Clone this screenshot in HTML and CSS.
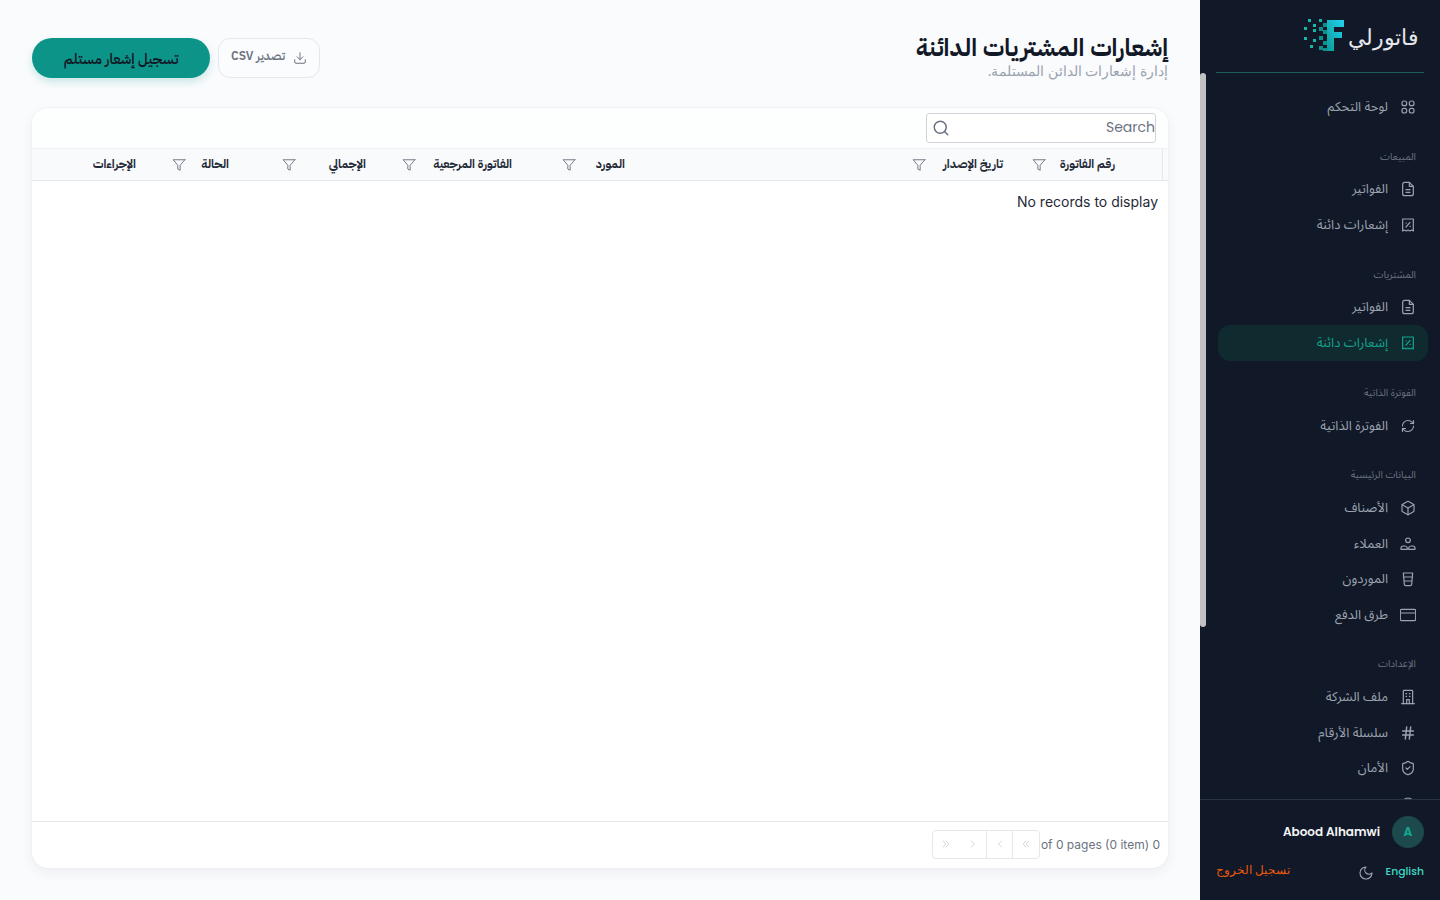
FILE: index.html
```html
<!DOCTYPE html>
<html lang="ar" dir="rtl">
<head>
<meta charset="utf-8">
<title>إشعارات المشتريات الدائنة</title>
<link rel="stylesheet" href="styles.css">
</head>
<body>
<div class="app">
  <aside class="sidebar">
    <div class="scroll-thumb"></div>
    <header class="brand">
      <span class="brand-name">فاتورلي</span>
      <svg class="logo" viewBox="0 0 50 40">
        <defs><linearGradient id="lg" x1="0" y1="1" x2="1" y2="0"><stop offset="0" stop-color="#0d9a98"/><stop offset="1" stop-color="#22d3ee"/></linearGradient></defs>
        <path fill="url(#lg)" d="M27 5h17v7H34v5h8v6h-8v13h-7z"/>
        <g fill="#14b8a6"><rect x="8" y="4" width="3" height="3"/><rect x="13" y="9" width="3" height="3"/><rect x="19" y="4" width="3" height="3"/><rect x="4" y="12" width="3" height="3"/><rect x="13" y="14" width="3" height="3"/><rect x="4" y="22" width="3" height="3"/><rect x="13" y="24" width="3" height="3"/><rect x="10" y="30" width="3" height="3"/></g>
        <g fill="#0e8f8a"><rect x="19" y="12" width="4" height="4"/><rect x="23" y="8" width="4" height="4"/><rect x="23" y="15" width="4" height="4"/><rect x="19" y="21" width="4" height="4"/><rect x="23" y="26" width="4" height="4"/><rect x="19" y="31" width="4" height="4"/><rect x="23" y="33" width="4" height="3"/></g>
      </svg>
    </header>
    <nav class="nav">
      <a class="item"><svg class="ic" viewBox="0 0 24 24"><rect x="3" y="3" width="7" height="7" rx="3"/><rect x="14" y="3" width="7" height="7" rx="3"/><rect x="3" y="14" width="7" height="7" rx="3"/><rect x="14" y="14" width="7" height="7" rx="3"/></svg><span>لوحة التحكم</span></a>

      <h6 class="label">المبيعات</h6>
      <a class="item"><svg class="ic" viewBox="0 0 24 24"><path d="M14 2H7a3 3 0 0 0-3 3v14a3 3 0 0 0 3 3h10a3 3 0 0 0 3-3V8z"/><path d="M14 2v6h6"/><path d="M9 13h6M9 17h6"/></svg><span>الفواتير</span></a>
      <a class="item"><svg class="ic" viewBox="0 0 24 24"><path d="M4 3h16v18l-2.700-1.500L14.500 21 12 19.500 9.500 21l-2.800-1.500L4 21z"/><path d="m9 15 6-7M9 9h.5M15 14h.5"/></svg><span>إشعارات دائنة</span></a>

      <h6 class="label">المشتريات</h6>
      <a class="item"><svg class="ic" viewBox="0 0 24 24"><path d="M14 2H7a3 3 0 0 0-3 3v14a3 3 0 0 0 3 3h10a3 3 0 0 0 3-3V8z"/><path d="M14 2v6h6"/><path d="M9 13h6M9 17h6"/></svg><span>الفواتير</span></a>
      <a class="item active"><svg class="ic" viewBox="0 0 24 24"><path d="M4 3h16v18l-2.700-1.500L14.500 21 12 19.500 9.500 21l-2.800-1.500L4 21z"/><path d="m9 15 6-7M9 9h.5M15 14h.5"/></svg><span>إشعارات دائنة</span></a>

      <h6 class="label">الفوترة الذاتية</h6>
      <a class="item"><svg class="ic" viewBox="-1 -1 26 26"><path d="M3 12a9 9 0 0 1 9-9 9.750 9.750 0 0 1 6.740 2.740L21 8"/><path d="M21 3v5h-5"/><path d="M21 12a9 9 0 0 1-9 9 9.750 9.750 0 0 1-6.740-2.740L3 16"/><path d="M8 16H3v5"/></svg><span>الفوترة الذاتية</span></a>

      <h6 class="label">البيانات الرئيسية</h6>
      <a class="item"><svg class="ic" viewBox="0 0 24 24"><path d="M21 8a2 2 0 0 0-1-1.730l-7-4a2 2 0 0 0-2 0l-7 4A2 2 0 0 0 3 8v8a2 2 0 0 0 1 1.730l7 4a2 2 0 0 0 2 0l7-4A2 2 0 0 0 21 16Z"/><path d="m3.300 7 8.700 5 8.700-5"/><path d="M12 22V12"/></svg><span>الأصناف</span></a>
      <a class="item"><svg class="ic" viewBox="0 0 24 24"><circle cx="12" cy="6.500" r="3.500"/><path d="M1.500 20v-1.500a3.500 3.500 0 0 1 3.500-3.500h2.500a3.500 3.500 0 0 1 3.500 3V20zM13 20v-2a3.500 3.500 0 0 1 3.500-3H19a3.500 3.500 0 0 1 3.500 3.500V20z"/></svg><span>العملاء</span></a>
      <a class="item"><svg class="ic" viewBox="0 0 24 24"><path d="M5 3h14l-1.500 17a2 2 0 0 1-2 1.800h-7a2 2 0 0 1-2-1.800z"/><path d="M5.500 9h13M7 15h10"/></svg><span>الموردون</span></a>
      <a class="item"><svg class="ic" viewBox="0 0 24 24"><rect x="0.500" y="3.500" width="23" height="17" rx="2"/><path d="M0.500 9h23"/></svg><span>طرق الدفع</span></a>

      <h6 class="label">الإعدادات</h6>
      <a class="item"><svg class="ic" viewBox="0 0 24 24"><path d="M5 22V3a1 1 0 0 1 1-1h12a1 1 0 0 1 1 1v19"/><path d="M2.500 22h19"/><path d="M9 7h1M14 7h1M9 11h1M14 11h1"/><path d="M10 22v-6h4v6"/></svg><span>ملف الشركة</span></a>
      <a class="item"><svg class="ic thick" viewBox="0 0 24 24"><path d="M4 9h16M4 15h16M10 3 8 21M16 3l-2 18"/></svg><span>سلسلة الأرقام</span></a>
      <a class="item"><svg class="ic" viewBox="0 0 24 24"><path d="M20 13c0 5-3.500 7.500-7.660 8.950a1 1 0 0 1-.670-.010C7.500 20.500 4 18 4 13V6a1 1 0 0 1 1-1c2 0 4.500-1.200 6.240-2.720a1.170 1.170 0 0 1 1.520 0C14.510 3.810 17 5 19 5a1 1 0 0 1 1 1z"/><path d="m9 12 2 2 4-4"/></svg><span>الأمان</span></a>
      <a class="item"><svg class="ic" viewBox="0 0 24 24"><circle cx="12" cy="12" r="9"/></svg></a>
    </nav>
    <footer class="side-foot">
      <div class="user">
        <span class="avatar">A</span>
        <span class="user-name">Abood Alhamwi</span>
      </div>
      <div class="foot-row">
        <span class="lang">English</span>
        <svg class="moon" viewBox="0 0 24 24"><path d="M12 3a6 6 0 0 0 9 9 9 9 0 1 1-9-9Z"/></svg>
        <span class="logout">تسجيل الخروج</span>
      </div>
    </footer>
  </aside>

  <main class="main">
    <div class="page-head">
      <div class="titles">
        <h1>إشعارات المشتريات الدائنة</h1>
        <p>إدارة إشعارات الدائن المستلمة.</p>
      </div>
      <div class="actions">
        <button class="btn-export"><svg viewBox="0 0 24 24"><path d="M21 15v4a2 2 0 0 1-2 2H5a2 2 0 0 1-2-2v-4"/><path d="m7 10 5 5 5-5"/><path d="M12 15V3"/></svg><span>تصدير CSV</span></button>
        <button class="btn-primary">تسجيل إشعار مستلم</button>
      </div>
    </div>

    <section class="card">
      <div class="toolbar">
        <label class="search">
          <input type="text" placeholder="Search" dir="rtl">
          <svg viewBox="0 0 24 24"><circle cx="11" cy="11" r="8"/><path d="m21 21-4.300-4.300"/></svg>
        </label>
      </div>
      <div class="thead">
        <div class="th c1"><span>رقم الفاتورة</span><svg class="fl" viewBox="0 0 24 24"><path d="M22 3H2l8 9.460V19l4 2v-8.540L22 3z"/></svg></div>
        <div class="th c2"><span>تاريخ الإصدار</span><svg class="fl" viewBox="0 0 24 24"><path d="M22 3H2l8 9.460V19l4 2v-8.540L22 3z"/></svg></div>
        <div class="th c3"><span>المورد</span><svg class="fl" viewBox="0 0 24 24"><path d="M22 3H2l8 9.460V19l4 2v-8.540L22 3z"/></svg></div>
        <div class="th c4"><span>الفاتورة المرجعية</span><svg class="fl" viewBox="0 0 24 24"><path d="M22 3H2l8 9.460V19l4 2v-8.540L22 3z"/></svg></div>
        <div class="th c5"><span>الإجمالي</span><svg class="fl" viewBox="0 0 24 24"><path d="M22 3H2l8 9.460V19l4 2v-8.540L22 3z"/></svg></div>
        <div class="th c6"><span>الحالة</span><svg class="fl" viewBox="0 0 24 24"><path d="M22 3H2l8 9.460V19l4 2v-8.540L22 3z"/></svg></div>
        <div class="th c7"><span>الإجراءات</span></div>
      </div>
      <div class="tbody"><p>No records to display</p></div>
      <div class="tfoot">
        <span class="page-info">0 of 0 pages (0 item)</span>
        <div class="pager">
          <button class="sep"><svg viewBox="0 0 24 24"><path d="m15 6-5 6 5 6M21 6l-5 6 5 6" transform="translate(-3.500)"/></svg></button>
          <button class="sep"><svg viewBox="0 0 24 24"><path d="m15 6-6 6 6 6"/></svg></button>
          <button><svg viewBox="0 0 24 24"><path d="m9 6 6 6-6 6"/></svg></button>
          <button><svg viewBox="0 0 24 24"><path d="m4 6 5 6-5 6M10 6l5 6-5 6" transform="translate(2.500)"/></svg></button>
        </div>
      </div>
    </section>
  </main>
</div>
</body>
</html>
```
FILE: styles.css
```css
* { box-sizing: border-box; }
html, body { margin: 0; height: 100%; overflow: hidden; }
body {
  font-family: Inter, "IBM Plex Sans Arabic", sans-serif;
  background: #fafbfd;
  color: #111827;
}
.app { display: flex; height: 900px; }
svg { fill: none; stroke: currentColor; stroke-width: 2; stroke-linecap: round; stroke-linejoin: round; flex: none; }

/* Sidebar */
.sidebar {
  position: relative;
  width: 240px;
  flex: none;
  background: #111827;
  display: flex;
  flex-direction: column;
}
.scroll-thumb {
  position: absolute;
  left: 0; top: 73px;
  width: 6px; height: 554px;
  background: #c1c1c1;
  border-radius: 3px;
  z-index: 2;
}
.brand {
  height: 73px;
  flex: none;
  margin: 0 16px;
  border-bottom: 1px solid #1b5f5c;
  display: flex;
  align-items: flex-start;
  padding: 15px 5px 0 0;
  gap: 0;
}
.brand-name { font-family: "Noto Sans", sans-serif; font-size: 22px; line-height: 42px; color: #e5e7eb; }
.logo { width: 50px; height: 40px; stroke: none; margin-right: -2px; }
.nav {
  flex: 1;
  min-height: 0;
  overflow: hidden;
  padding: 16px 12px 0;
}
.item {
  height: 35.55px;
  display: flex;
  align-items: center;
  gap: 12px;
  padding: 0 12px;
  border-radius: 12px;
  font-family: "Noto Sans Arabic", sans-serif;
  font-size: 13px;
  color: #9ca3af;
  width: 210px;
}
.item .ic { width: 16px; height: 16px; stroke-width: 1.800; }
.item .thick { stroke-width: 2.200; }
.item.active { background: #102b30; color: #14a28f; }
.label {
  margin: 24px 0 7px;
  padding: 0 12px;
  font-family: "Noto Sans Arabic", sans-serif;
  font-size: 10px;
  line-height: 16px;
  font-weight: 400;
  color: #6b7280;
}
.side-foot {
  height: 101px;
  flex: none;
  border-top: 1px solid #2a3342;
  padding: 16px 16px 0;
}
.user { display: flex; align-items: center; gap: 12px; }
.avatar {
  width: 32px; height: 32px;
  border-radius: 50%;
  background: #1d4a4c;
  color: #14a28f;
  font-size: 12px;
  font-weight: 700;
  font-family: Poppins, sans-serif;
  display: flex; align-items: center; justify-content: center;
}
.user-name { font-family: Poppins, sans-serif; font-size: 12px; font-weight: 600; color: #f3f4f6; }
.foot-row { display: flex; align-items: center; margin-top: 13px; }
.lang { font-family: Poppins, sans-serif; font-size: 10.800px; font-weight: 500; color: #3fd9c2; }
.moon { width: 16px; height: 16px; margin-right: 12px; margin-top: 3px; color: #9ca3af; stroke-width: 1.700; }
.logout { margin-right: auto; margin-bottom: 4px; font-family: "Noto Sans", sans-serif; font-size: 12px; color: #ea580c; }

/* Main */
.main { flex: 1; min-width: 0; padding: 32px; display: flex; flex-direction: column; }
.page-head { display: flex; justify-content: space-between; height: 76px; }
.titles h1 { margin: 0; font-size: 24.250px; line-height: 32px; font-weight: 700; color: #111827; }
.titles p { margin: 0; font-family: "Noto Sans", sans-serif; font-size: 13.700px; line-height: 14px; color: #9ca3af; }
.actions { display: flex; gap: 8px; padding-top: 6px; height: 46px; }
.btn-export {
  width: 102px; height: 40px;
  display: flex; align-items: center; justify-content: center; gap: 8px;
  background: #fbfcfe;
  border: 1px solid #e5e7eb;
  border-radius: 12px;
  font: 600 12px "IBM Plex Sans Arabic", sans-serif;
  color: #6b7280;
}
.btn-export span { margin-top: -5px; }
.btn-export svg { width: 14px; height: 14px; stroke-width: 1.700; }
.btn-primary {
  width: 178px; height: 40px;
  padding: 2px 0 0;
  background: #0d9488;
  border: 0;
  border-radius: 20px;
  font: 600 14.250px "IBM Plex Sans Arabic", sans-serif;
  color: #111827;
  box-shadow: 0 4px 8px rgba(13,148,136,.2);
}
.card {
  height: 760px;
  background: #fff;
  border-radius: 16px;
  box-shadow: 0 0 0 1px rgba(229,231,235,.35), 0 4px 14px rgba(17,24,39,.06);
  display: flex; flex-direction: column;
  overflow: hidden;
}
.toolbar { height: 40px; background: #fdfefe; padding: 5px 12px 0; flex: none; }
.search {
  position: relative;
  display: block;
  width: 230px; height: 30px;
}
.search input {
  width: 100%; height: 100%;
  border: 1px solid #d1d5db;
  border-radius: 3px;
  padding: 0 0 2px 30px;
  font: 400 14px Poppins, sans-serif;
  background: #fff;
  outline: 0;
}
.search input::placeholder { color: #6b7280; }
.search svg { position: absolute; left: 6px; top: 6px; width: 18px; height: 18px; color: #6b7280; stroke-width: 2; }
.thead {
  height: 33px; flex: none;
  display: flex;
  background: #f8fafb;
  border-top: 1px solid #eef0f3;
  border-bottom: 1px solid #e5e7eb;
  padding-right: 5px;
}
.th {
  display: flex; align-items: center; justify-content: space-between;
  font-size: 12px; font-weight: 700; color: #1f2937;
}
.th span { margin-top: -2px; }
.thead .c1 { border-right: 1px solid #e5e7eb; }
.fl { width: 14px; height: 14px; color: #6b7280; stroke-width: 1.600; margin-left: 1px; }
.c1 { width: 132px; padding-right: 47px; }
.c2 { width: 120px; padding-right: 28px; }
.c3 { width: 350px; padding-right: 286px; }
.c4 { width: 160px; padding-right: 49px; }
.c5 { width: 120px; padding-right: 35px; }
.c6 { width: 110px; padding-right: 52px; }
.c7 { width: 139px; padding-right: 35px; }
.tbody { flex: 1; padding: 12px 10px; font-size: 14px; line-height: 17px; color: #1f2937; }
.tbody p { margin: 0; text-align: right; unicode-bidi: plaintext; }
.tfoot {
  height: 47px; flex: none;
  border-top: 1px solid #e5e7eb;
  display: flex; align-items: center;
  padding: 0 8px 2px 0;
  font-size: 12px;
  color: #6b7280;
}
.page-info { margin-left: 1px; }
.pager {
  height: 29px;
  display: flex;
  border: 1px solid #e5e7eb;
  border-radius: 4px;
}
.pager button {
  width: 26.500px; height: 27px;
  background: none; border: 0; padding: 0;
  display: flex; align-items: center; justify-content: center;
  color: #d1d5db;
}
.pager .sep { border-left: 1px solid #e5e7eb; }
.pager svg { width: 12px; height: 12px; stroke-width: 2; }
```
